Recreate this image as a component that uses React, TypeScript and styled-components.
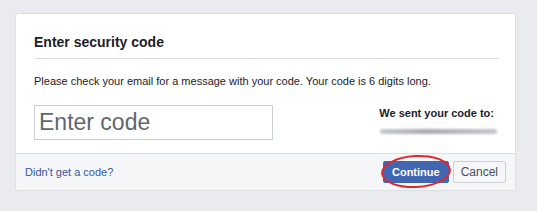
import React from 'react'
import styled, { createGlobalStyle } from 'styled-components'

const GlobalStyle = createGlobalStyle`
  html, body {
    margin: 0;
    padding: 0;
    background: #e9ebee;
    font-family: "Liberation Sans", Arial, sans-serif;
  }
`

const Page = styled.div`
  padding: 13px 0 0 15px;
  height: 211px;
  box-sizing: border-box;
`

const Card = styled.div`
  width: 501px;
  box-sizing: border-box;
  background: #fff;
  border: 1px solid #dddfe2;
  border-radius: 3px;
  overflow: hidden;
`

const Header = styled.div`
  margin: 0 16px 0 18px;
  padding: 19px 0 7px;
  border-bottom: 1px solid #dadde1;
`

const Title = styled.h2`
  margin: 0;
  font-size: 14px;
  line-height: 18px;
  font-weight: bold;
  color: #1d2129;
`

const Body = styled.div`
  padding: 14px 16px 13px 18px;
`

const Text = styled.p`
  margin: 0 0 16px;
  font-size: 11px;
  line-height: 16px;
  color: #1d2129;
`

const Row = styled.div`
  display: flex;
  justify-content: space-between;
  align-items: flex-start;
`

const CodeInput = styled.input`
  width: 239px;
  height: 35px;
  box-sizing: border-box;
  border: 1px solid #ccd0d5;
  padding: 0 4px;
  font-family: inherit;
  font-size: 23px;
  color: #1d2129;
  outline: none;

  &::placeholder {
    color: #606770;
  }
`

const Sent = styled.div`
  display: flex;
  flex-direction: column;
  align-items: flex-end;
  margin-right: 5px;
`

const SentLabel = styled.div`
  font-size: 11px;
  line-height: 16px;
  font-weight: bold;
  color: #1d2129;
`

const Hidden = styled.div`
  margin-top: 8px;
  margin-right: -3px;
  width: 117px;
  height: 5px;
  border-radius: 3px;
  background: linear-gradient(90deg, #c8c9cb, #a9abad 40%, #b9babc 70%, #c6c7c9);
  filter: blur(1px);
`

const Footer = styled.div`
  display: flex;
  align-items: center;
  justify-content: space-between;
  background: #f5f6f7;
  border-top: 1px solid #dddfe2;
  padding: 7px 9px;
`

const Link = styled.a`
  font-size: 11px;
  color: #365899;
  text-decoration: none;
  cursor: pointer;
`

const Buttons = styled.div`
  display: flex;
  gap: 4px;
`

const Button = styled.button<{ $primary?: boolean }>`
  position: relative;
  height: 22px;
  padding: 0 ${p => (p.$primary ? '8px' : '7px')};
  font-family: inherit;
  font-size: ${p => (p.$primary ? '11px' : '12px')};
  font-weight: ${p => (p.$primary ? 'bold' : 'normal')};
  border-radius: 2px;
  border: 1px solid ${p => (p.$primary ? '#4267b2' : '#ccd0d5')};
  background: ${p => (p.$primary ? '#4267b2' : '#f5f6f7')};
  color: ${p => (p.$primary ? '#fff' : '#4b4f56')};
  cursor: pointer;
`

// red hand-drawn ring around the Continue button
const Circle = styled.span`
  position: absolute;
  left: -3px;
  right: -3px;
  top: -7px;
  bottom: -6px;
  border: 2px solid #e2262c;
  border-radius: 50%;
  transform: rotate(-3deg);
  pointer-events: none;
`

export default function App() {
  return (
    <Page>
      <GlobalStyle />
      <Card>
        <Header>
          <Title>Enter security code</Title>
        </Header>
        <Body>
          <Text>Please check your email for a message with your code. Your code is 6 digits long.</Text>
          <Row>
            <CodeInput placeholder="Enter code" />
            <Sent>
              <SentLabel>We sent your code to:</SentLabel>
              <Hidden />
            </Sent>
          </Row>
        </Body>
        <Footer>
          <Link>Didn't get a code?</Link>
          <Buttons>
            <Button $primary>
              Continue
              <Circle />
            </Button>
            <Button>Cancel</Button>
          </Buttons>
        </Footer>
      </Card>
    </Page>
  )
}
